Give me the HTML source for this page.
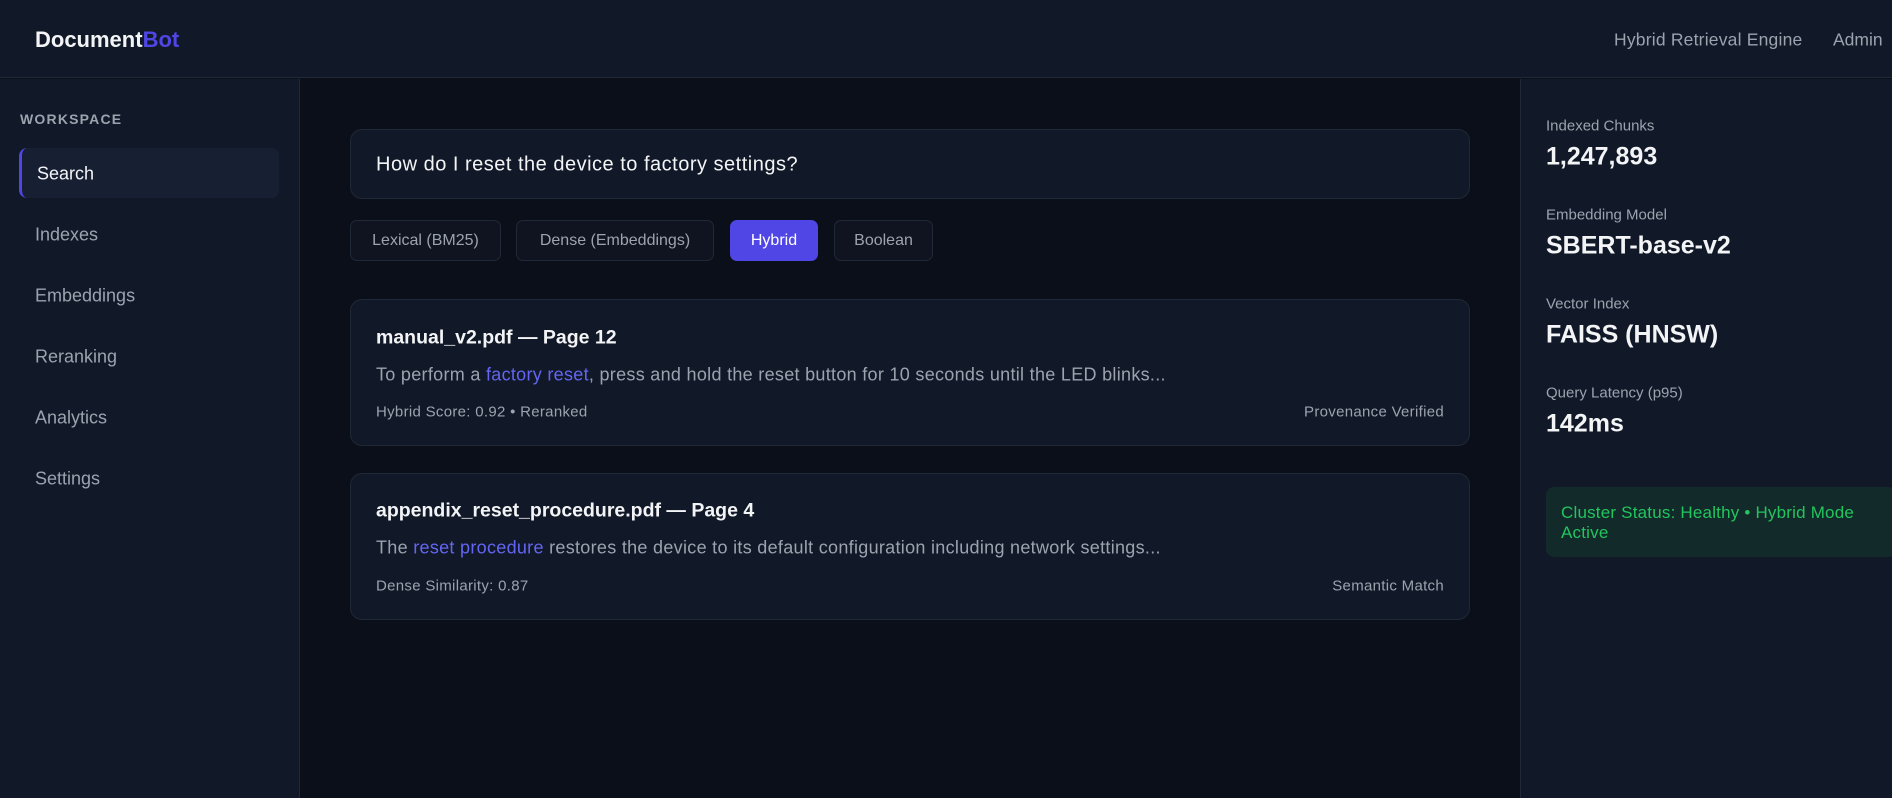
<!DOCTYPE html>
<html><head><meta charset="utf-8"><style>
*{box-sizing:border-box;margin:0;padding:0}
body{width:1892px;height:798px;overflow:hidden;background:#0b0f19;font-family:"Liberation Sans",sans-serif;position:relative;color:#e5e7eb}
.a{position:absolute;white-space:nowrap}
.hdr{left:0;top:0;width:1892px;height:78px;background:#111827;border-bottom:1px solid #1f2937}
.side{left:0;top:79px;width:300px;height:719px;background:#111827;border-right:1px solid #1f2937}
.right{left:1520px;top:79px;width:372px;height:719px;background:#111827;border-left:1px solid #1f2937}
.nav{left:35px;font-size:18px;color:#9ca3af;transform:translateY(-50%)}
.box{background:#111827;border:1px solid #1f2937;border-radius:12px}
.btn{top:220px;height:41px;border:1px solid #1f2937;border-radius:7px;background:#0f1420;color:#9ca3af;font-size:16px;display:flex;align-items:center;justify-content:center}
.lbl{left:1546px;font-size:15px;color:#9ca3af;transform:translateY(-50%)}
.val{left:1546px;font-size:25px;font-weight:bold;color:#f3f4f6;transform:translateY(-50%)}
.c{transform:translateY(-50%)}
.hl{color:#6366f1}
.body{font-size:18px;letter-spacing:0.3px;color:#9ca3af}
.meta{font-size:15px;letter-spacing:0.3px;color:#9ca3af}
</style></head><body>
<div class="a hdr"></div>
<div class="a c" style="left:35px;top:40px;font-size:22px;font-weight:bold;color:#f3f4f6">Document<span style="color:#4f46e5">Bot</span></div>
<div class="a c" style="left:1614px;top:40px;font-size:17.5px;color:#9ca3af;letter-spacing:0.2px">Hybrid Retrieval Engine</div>
<div class="a c" style="left:1833px;top:40px;font-size:17.5px;color:#9ca3af">Admin</div>

<div class="a side"></div>
<div class="a c" style="left:20px;top:119px;font-size:14px;font-weight:bold;letter-spacing:1.2px;color:#9ca3af">WORKSPACE</div>
<div class="a" style="left:19px;top:148px;width:260px;height:50px;background:#172033;border-radius:8px;border-left:3px solid #4f46e5"></div>
<div class="a nav" style="left:37px;top:174px;color:#f3f4f6">Search</div>
<div class="a nav" style="top:235px">Indexes</div>
<div class="a nav" style="top:296px">Embeddings</div>
<div class="a nav" style="top:357px">Reranking</div>
<div class="a nav" style="top:418px">Analytics</div>
<div class="a nav" style="top:479px">Settings</div>

<div class="a box" style="left:350px;top:129px;width:1120px;height:70px"></div>
<div class="a c" style="left:376px;top:165px;font-size:20px;letter-spacing:0.5px;color:#f3f4f6">How do I reset the device to factory settings?</div>
<div class="a btn" style="left:350px;width:151px">Lexical (BM25)</div>
<div class="a btn" style="left:516px;width:198px">Dense (Embeddings)</div>
<div class="a btn" style="left:730px;width:88px;background:#4f46e5;border-color:#4f46e5;color:#fff">Hybrid</div>
<div class="a btn" style="left:834px;width:99px">Boolean</div>

<div class="a box" style="left:350px;top:299px;width:1120px;height:147px"></div>
<div class="a c" style="left:376px;top:338px;font-size:19.5px;font-weight:bold;color:#f3f4f6">manual_v2.pdf — Page 12</div>
<div class="a c body" style="left:376px;top:375px">To perform a <span class="hl">factory reset</span>, press and hold the reset button for 10 seconds until the LED blinks...</div>
<div class="a c meta" style="left:376px;top:412px">Hybrid Score: 0.92 • Reranked</div>
<div class="a c meta" style="right:448px;top:412px">Provenance Verified</div>

<div class="a box" style="left:350px;top:473px;width:1120px;height:147px"></div>
<div class="a c" style="left:376px;top:511px;font-size:19.5px;font-weight:bold;color:#f3f4f6">appendix_reset_procedure.pdf — Page 4</div>
<div class="a c body" style="left:376px;top:548px">The <span class="hl">reset procedure</span> restores the device to its default configuration including network settings...</div>
<div class="a c meta" style="left:376px;top:586px">Dense Similarity: 0.87</div>
<div class="a c meta" style="right:448px;top:586px">Semantic Match</div>

<div class="a right"></div>
<div class="a lbl" style="top:126px">Indexed Chunks</div>
<div class="a val" style="top:157px">1,247,893</div>
<div class="a lbl" style="top:215px">Embedding Model</div>
<div class="a val" style="top:246px">SBERT-base-v2</div>
<div class="a lbl" style="top:304px">Vector Index</div>
<div class="a val" style="top:335px">FAISS (HNSW)</div>
<div class="a lbl" style="top:393px">Query Latency (p95)</div>
<div class="a val" style="top:424px">142ms</div>
<div class="a" style="left:1546px;top:487px;width:350px;height:70px;background:#132a2a;border-radius:8px"></div>
<div class="a" style="left:1561px;top:503px;font-size:17px;line-height:20px;color:#22c55e;white-space:normal;width:320px;letter-spacing:0.2px">Cluster Status: Healthy • Hybrid Mode Active</div>
</body></html>
